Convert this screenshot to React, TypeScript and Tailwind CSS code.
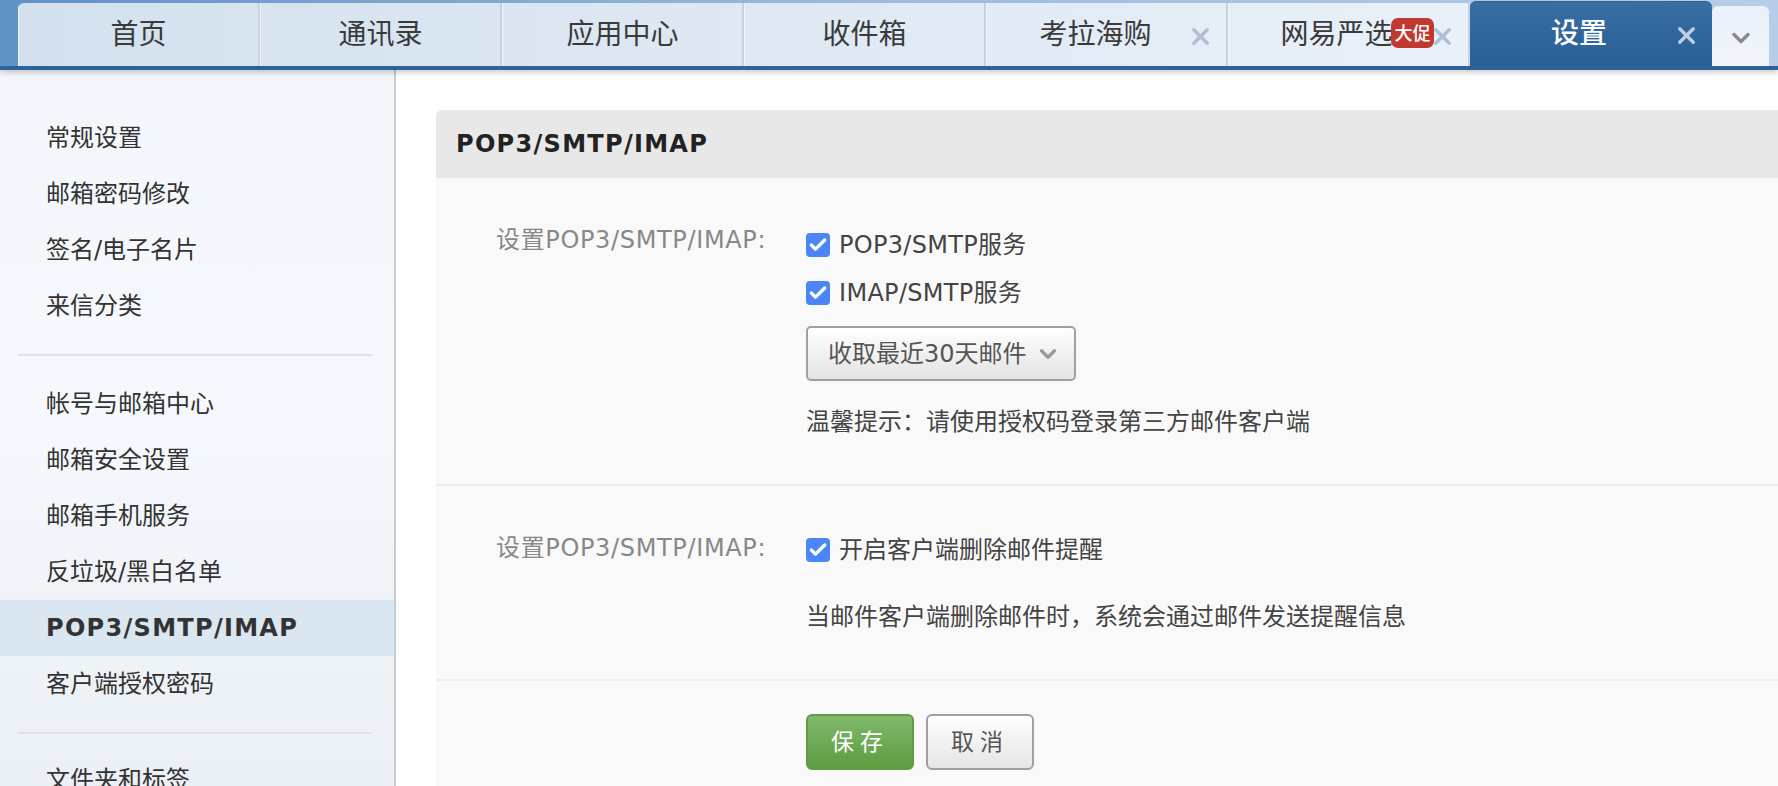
import { Check, ChevronDown, X } from 'lucide-react'

const fontStack = '[font-family:"DejaVu_Sans","Noto_Sans_CJK_SC",sans-serif]'

const tabs = [
  { label: '首页' },
  { label: '通讯录' },
  { label: '应用中心' },
  { label: '收件箱' },
  { label: '考拉海购', closable: true, offset: true },
  { label: '网易严选', closable: true, badge: '大促' },
]

const menuGroups = [
  ['常规设置', '邮箱密码修改', '签名/电子名片', '来信分类'],
  ['帐号与邮箱中心', '邮箱安全设置', '邮箱手机服务', '反垃圾/黑白名单', 'POP3/SMTP/IMAP', '客户端授权密码'],
  ['文件夹和标签'],
]

function Tab({ label, closable, badge, offset }: { label: string; closable?: boolean; badge?: string; offset?: boolean }) {
  return (
    <div className="relative flex h-[63px] w-[242px] shrink-0 items-center justify-center border-r-2 border-r-[#c5d3e0] border-l border-l-[#f2f6fb] text-[28px] text-[#3a3a3a]">
      <span className={offset ? 'mr-[22px]' : badge ? 'mr-[24px]' : ''}>{label}</span>
      {badge ? (
        <span className="absolute left-[162px] top-[15px] z-10 flex h-[30px] w-[43px] items-center justify-center rounded-[7px] bg-[#c0392f] text-[18px] font-medium text-white">
          {badge}
        </span>
      ) : null}
      {closable ? (
        <X className="absolute right-[12px] top-[20px] h-[27px] w-[27px] text-[#aebfd2]" strokeWidth={3} />
      ) : null}
    </div>
  )
}

function CheckRow({ label, spaced }: { label: string; spaced?: boolean }) {
  return (
    <label className={`flex h-[48px] items-center text-[24px] text-[#444] ${spaced ? 'tracking-[0.3px]' : ''}`}>
      <span className="mr-[9px] flex h-6 w-6 items-center justify-center rounded-[4px] bg-[#4a86f7]">
        <Check className="h-5 w-5 text-white" strokeWidth={4} />
      </span>
      {label}
    </label>
  )
}

export default function App() {
  return (
    <div className={`flex h-[786px] w-[1778px] flex-col overflow-hidden bg-white ${fontStack}`}>
      <header className="relative z-10 flex h-[70px] shrink-0 items-end border-b-4 border-[#2d6399] bg-gradient-to-r from-[#5f93c4] via-[#9dbcdd] to-[#b5cde8] pl-[18px] shadow-[0_3px_5px_rgba(0,0,0,0.18)]">
        <div className="flex h-[63px] overflow-hidden rounded-tl-md bg-gradient-to-r from-[#d3e1ee] to-[#e9f0f9]">
          {tabs.map((tab) => (
            <Tab key={tab.label} {...tab} />
          ))}
        </div>
        <div className="relative flex h-[65px] w-[242px] shrink-0 items-center justify-center rounded-t-md border-t border-[#2d6399] bg-gradient-to-b from-[#376ea3] to-[#2a5f96] text-[28px] text-white">
          <span className="mr-6 font-medium">设置</span>
          <X className="absolute right-[12px] top-[20px] h-[27px] w-[27px] text-[#bcd0e4]" strokeWidth={3} />
        </div>
        <div className="flex h-[60px] w-[57px] shrink-0 items-center justify-center rounded-t-md bg-gradient-to-b from-[#e9f0f9] to-[#f2f6fc]">
          <ChevronDown className="mt-1 h-7 w-7 text-[#8a8a8a]" strokeWidth={3} />
        </div>
      </header>

      <div className="flex min-h-0 flex-1">
        <aside className="w-[396px] shrink-0 border-r-2 border-[#c3ccd8] bg-gradient-to-b from-[#f3f7fc] via-[#f5f8fd] to-[#eaf0f5] pt-10">
          {menuGroups.map((group, i) => (
            <div key={group[0]}>
              {i > 0 ? <div className={`ml-[18px] mr-[22px] mt-5 h-0.5 bg-[#dfe2e7] ${i === 1 ? 'mb-5' : 'mb-[18px]'}`} /> : null}
              {group.map((item) => {
                const active = item === 'POP3/SMTP/IMAP'
                return (
                  <div
                    key={item}
                    className={`flex h-[56px] items-center pl-[46px] text-[24px] text-[#333] ${active ? 'bg-[#dae6f0] font-bold tracking-[1.3px] text-[#222]' : ''}`}
                  >
                    {item}
                  </div>
                )
              })}
            </div>
          ))}
        </aside>

        <main className="min-w-0 flex-1 pl-10 pt-10">
          <section className="rounded-tl-md bg-[#f9f9f9]">
            <h2 className="flex h-[68px] items-center rounded-tl-md bg-[#e8e8e8] pb-px pl-5 text-[24px] font-bold tracking-[1.3px] text-[#222]">POP3/SMTP/IMAP</h2>

            <div className="flex h-[308px] border-b-2 border-[#eeeeee] pl-[60px] pt-[43px]">
              <div className="w-[310px] shrink-0 text-[24px] leading-[38px] tracking-[0.65px] text-[#888]">设置POP3/SMTP/IMAP:</div>
              <div>
                <CheckRow label="POP3/SMTP服务" spaced />
                <CheckRow label="IMAP/SMTP服务" spaced />
                <div className="mt-[9px] flex h-[55px] w-[270px] items-center justify-between rounded-[5px] border-2 border-[#a0a0a0] bg-gradient-to-b from-white to-[#e3e3e3] pl-[20px] pr-[13px] text-[24px] text-[#555]">
                  收取最近30天邮件
                  <ChevronDown className="h-[26px] w-[26px] text-[#999]" strokeWidth={3} />
                </div>
                <p className="mt-[24px] text-[24px] leading-[34px] text-[#444]">温馨提示：请使用授权码登录第三方邮件客户端</p>
              </div>
            </div>

            <div className="flex h-[195px] border-b-2 border-[#eeeeee] pl-[60px] pt-[43px]">
              <div className="w-[310px] shrink-0 text-[24px] leading-[38px] tracking-[0.65px] text-[#888]">设置POP3/SMTP/IMAP:</div>
              <div className="-mt-[3px]">
                <CheckRow label="开启客户端删除邮件提醒" />
                <p className="mt-[26px] text-[24px] leading-[34px] text-[#444]">当邮件客户端删除邮件时，系统会通过邮件发送提醒信息</p>
              </div>
            </div>

            <div className="flex gap-[12px] pb-4 pl-[370px] pt-[33px]">
              <button className="flex h-[56px] w-[108px] items-center justify-center rounded-[6px] border-2 border-[#5f9c43] bg-gradient-to-b from-[#80b96b] to-[#5d9c41] text-[23px] tracking-[6px] text-white">
                保存
              </button>
              <button className="flex h-[56px] w-[108px] items-center justify-center rounded-[6px] border-2 border-[#a0a0a0] bg-gradient-to-b from-white to-[#e5e5e5] text-[23px] tracking-[6px] text-[#555]">
                取消
              </button>
            </div>
          </section>
        </main>
      </div>
    </div>
  )
}
